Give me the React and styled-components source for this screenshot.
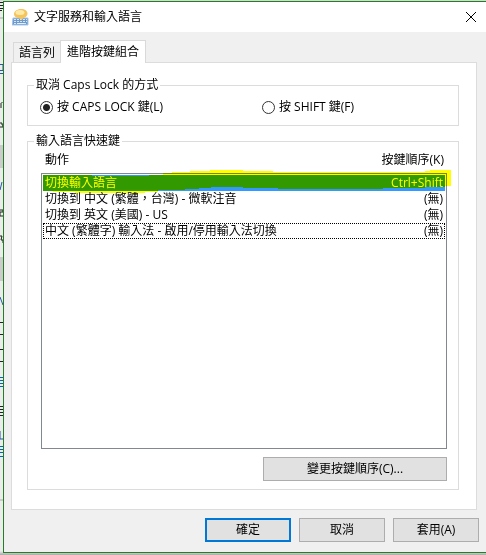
import React, { useState } from 'react'
import styled, { createGlobalStyle } from 'styled-components'

const GlobalStyle = createGlobalStyle`
    * {
        box-sizing: border-box;
    }
    body {
        margin: 0;
        background: #ececec;
        color: #000;
        font: 12px/16px 'Open Sans', 'Noto Sans CJK TC', sans-serif;
        overflow: hidden;
    }
    button, input {
        font: inherit;
        color: inherit;
    }
`

const Desktop = styled.div`
    display: flex;
    padding: 1px 0 2px;
    background: linear-gradient(#d0d0d0, #ececec 2px, #ececec calc(100% - 4px), #a8a8a8);
`

const Behind = styled.svg`
    flex: none;
    width: 3px;
    height: 552px;
`

const Dialog = styled.main`
    flex: 1;
    min-width: 0;
    border: 1px solid #228022;
    border-right: 0;
    background: #f0f0f0;
`

const TitleBar = styled.header`
    display: flex;
    align-items: center;
    gap: 5px;
    height: 30px;
    padding: 0 9px 0 8px;
    background: #fff;
`

const Title = styled.h1`
    flex: 1;
    margin: 0;
    font-size: 12px;
    font-weight: 400;
`

const CloseButton = styled.button`
    display: flex;
    padding: 0;
    border: 0;
    background: none;
`

const Body = styled.div`
    padding: 8px 7px 0;
`

const TabList = styled.div`
    display: flex;
    align-items: flex-end;
    padding-left: 2px;
`

const Tab = styled.button`
    height: ${({ $active }) => ($active ? '23px' : '20px')};
    margin-bottom: ${({ $active }) => ($active ? '-1px' : '0')};
    padding: 0 6px;
    border: 1px solid #d9d9d9;
    border-bottom: 0;
    border-right-width: ${({ $active }) => ($active ? '1px' : '0')};
    background: ${({ $active }) => ($active ? '#fff' : '#f0f0f0')};

    &:first-child {
        padding: 0 5px;
    }
`

const Panel = styled.div`
    display: flex;
    flex-direction: column;
    gap: 7px;
    margin-right: 2px;
    padding: 14px 17px 19px 15px;
    border: 1px solid #dcdcdc;
    background: #fff;
`

const Group = styled.fieldset`
    min-width: 0;
    margin: 0;
    padding: 0;
    border: 1px solid #dcdcdc;
`

const Legend = styled.legend`
    margin-left: 6px;
    padding: 0 2px;
`

const RadioRow = styled.div`
    display: grid;
    grid-template-columns: 222px 1fr;
    padding: 6px 12px 10px;
`

const RadioLabel = styled.label`
    display: flex;
    align-items: center;
    gap: 4px;
`

const Radio = styled.input`
    appearance: none;
    width: 13px;
    height: 13px;
    margin: 0;
    border: 1px solid #333;
    border-radius: 50%;
    background: #fff;
    &:checked {
        background: radial-gradient(circle, #222 3px, #fff 4px);
    }
`

const KeyArea = styled.div`
    padding: 3px 11px 8px 13px;
`

const ListArea = styled.div`
    position: relative;
`

const KeyTable = styled.table`
    display: block;
`

const Head = styled.thead`
    display: block;
    padding: 0 3px 5px 4px;
`

const List = styled.tbody`
    display: block;
    height: 276px;
    padding: 1px;
    border: 1px solid #828790;
`

const Row = styled.tr`
    display: flex;
    justify-content: space-between;
    height: 16px;
    padding: 0 2px;
    background: ${({ $selected }) => ($selected ? '#3399ff' : '#fff')};
    color: ${({ $selected }) => ($selected ? '#fff' : '#000')};
    outline: ${({ $focused }) => ($focused ? '1px dotted #000' : 'none')};
    outline-offset: -1px;
`

const HeadRow = styled.tr`
    display: flex;
    justify-content: space-between;
`

const HeadCell = styled.th`
    padding: 0;
    font-weight: 400;
`

const Cell = styled.td`
    padding: 0;
    white-space: nowrap;
`

// highlighter pen stroke over the selected row
const Marker = styled.svg`
    position: absolute;
    top: 13px;
    left: 0;
    width: calc(100% + 6px);
    height: 30px;
    mix-blend-mode: multiply;
    pointer-events: none;
`

const Actions = styled.div`
    display: flex;
    justify-content: flex-end;
    gap: 8px;
    padding: ${({ $pad }) => $pad || '0'};
`

const Button = styled.button`
    width: ${({ $wide }) => ($wide ? '184px' : '86px')};
    height: 24px;
    padding: 0;
    border: ${({ $primary }) => ($primary ? '2px solid #0078d7' : '1px solid #adadad')};
    background: #e1e1e1;
`

const rows = [
    { action: '切換輸入語言', keys: 'Ctrl+Shift' },
    { action: '切換到 中文 (繁體，台灣) - 微軟注音', keys: '(無)' },
    { action: '切換到 英文 (美國) - US', keys: '(無)' },
    { action: '中文 (繁體字) 輸入法 - 啟用/停用輸入法切換', keys: '(無)' },
]

function KeyboardIcon() {
    return (
        <svg width="17" height="17" viewBox="0 0 17 17" aria-hidden="true">
            <path d="M1 9h15v7H0z" fill="#6d9bd0" stroke="#a9c6e6" />
            <path d="M2 10.5h13M2 12.5h13M2 14.5h3M12 14.5h3" stroke="#d6e6f7" strokeDasharray="2 1" />
            <path d="M5 14.5h7" stroke="#e4effa" />
            <path d="M9 0c4 0 6.500 1.800 6.500 4.500S13 9 11 9l-1 2-3-2C4 9 2 7.500 2 5S5 0 9 0z" fill="#f3c55c" />
            <ellipse cx="8" cy="3.500" rx="4.500" ry="2.500" fill="#fdeaa8" />
        </svg>
    )
}

export default function App() {
    const [tab, setTab] = useState(1)
    const [capsKey, setCapsKey] = useState('caps')
    const [selected, setSelected] = useState(0)

    return (
        <>
            <GlobalStyle />
            <Desktop>
                <Behind viewBox="0 0 3 552" aria-hidden="true">
                    <path d="M0 17h3M0 145h3M0 166h3M0 257h3M0 279h3M0 499h3" stroke="#aaa" />
                    <path d="M0 146h3v20H0zM0 258h3v21H0z" fill="#ccc" />
                    <path d="M0 1.5h3M0 4.5h3M0 7.5h3M0 9.5h2M1 102v5M2 101v1M0 122h2v2h1v2H0M0 209h3v2H0v4h3M0 235h2l-1 4h2v3" fill="none" stroke="#222" />
                    <path d="M0 321.5h3M0 333.5h3M0 348.5h3M0 360.5h3M0 405.5h3M0 408.5h3M0 411.5h3M0 414.5h3" stroke="#222" />
                    <path d="M0 63.5h3v6H0M0 72.5h3M2 181l-2 8M0 296l3 8M0 430v8h3" fill="none" stroke="#2855a8" />
                    <path d="M0 376.5h3M0 379.5h3M0 382.5h3M0 385.5h3M0 445.5h3M0 448.5h3M0 451.5h3M0 455.5h3" stroke="#0067b8" />
                </Behind>
                <Dialog>
                    <TitleBar>
                        <KeyboardIcon />
                        <Title>文字服務和輸入語言</Title>
                        <CloseButton type="button" aria-label="關閉">
                            <svg width="12" height="12" viewBox="0 0 12 12">
                                <path d="M1 1l10 10M11 1L1 11" stroke="#000" />
                            </svg>
                        </CloseButton>
                    </TitleBar>
                    <Body>
                        <TabList role="tablist">
                            {['語言列', '進階按鍵組合'].map((name, i) => (
                                <Tab key={name} type="button" role="tab" aria-selected={tab === i} $active={tab === i} onClick={() => setTab(i)}>
                                    {name}
                                </Tab>
                            ))}
                        </TabList>
                        <Panel>
                            <Group>
                                <Legend>取消 Caps Lock 的方式</Legend>
                                <RadioRow>
                                    <RadioLabel>
                                        <Radio type="radio" name="caps" checked={capsKey === 'caps'} onChange={() => setCapsKey('caps')} />
                                        按 CAPS LOCK 鍵(L)
                                    </RadioLabel>
                                    <RadioLabel>
                                        <Radio type="radio" name="caps" checked={capsKey === 'shift'} onChange={() => setCapsKey('shift')} />
                                        按 SHIFT 鍵(F)
                                    </RadioLabel>
                                </RadioRow>
                            </Group>
                            <Group>
                                <Legend>輸入語言快速鍵</Legend>
                                <KeyArea>
                                    <ListArea>
                                        <KeyTable>
                                            <Head>
                                                <HeadRow>
                                                    <HeadCell>動作</HeadCell>
                                                    <HeadCell>按鍵順序(K)</HeadCell>
                                                </HeadRow>
                                            </Head>
                                            <List>
                                                {rows.map((row, i) => (
                                                    <Row key={row.action} $selected={selected === i} $focused={i === 3} onClick={() => setSelected(i)}>
                                                        <Cell>{row.action}</Cell>
                                                        <Cell>{row.keys}</Cell>
                                                    </Row>
                                                ))}
                                            </List>
                                        </KeyTable>
                                        <Marker viewBox="0 0 412 30" preserveAspectRatio="none" shapeRendering="crispEdges" aria-hidden="true">
                                            <path d="M2 10H51V11H108V10H122V8H131V7H149V6H169V5H202V6H232V7H384V6H389V5H410V21H404V22H384V23H342V24H237V23H202V22H170V23H158V24H144V25H117V27H104V28H34V27H12V26H2z" fill="#ff0" />
                                        </Marker>
                                    </ListArea>
                                    <Actions $pad="8px 0 0">
                                        <Button type="button" $wide>變更按鍵順序(C)...</Button>
                                    </Actions>
                                </KeyArea>
                            </Group>
                        </Panel>
                        <Actions $pad="8px 0 9px">
                            <Button type="button" $primary>確定</Button>
                            <Button type="button">取消</Button>
                            <Button type="button">套用(A)</Button>
                        </Actions>
                    </Body>
                </Dialog>
            </Desktop>
        </>
    )
}
